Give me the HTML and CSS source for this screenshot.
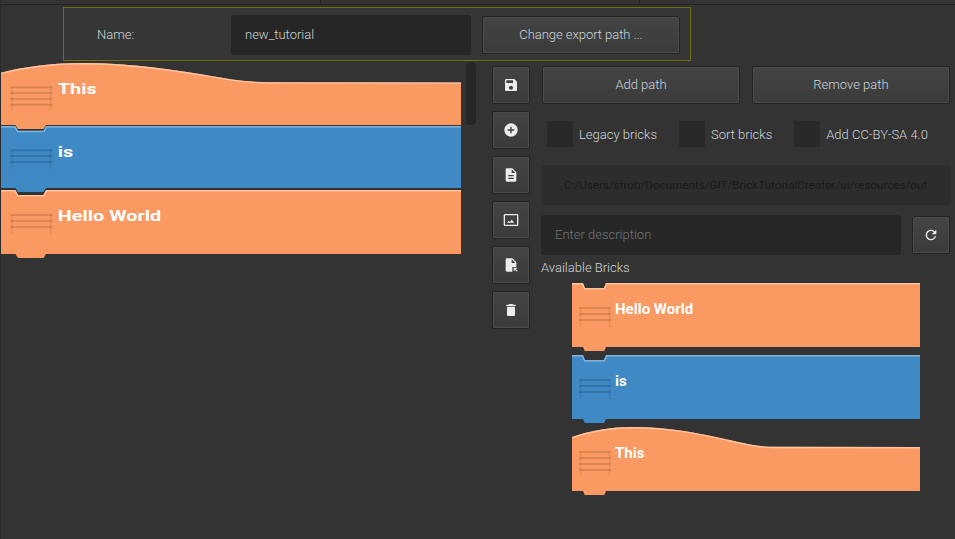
FILE: index.html
```html
<!DOCTYPE html>
<html lang="en">
<head>
<meta charset="utf-8">
<title>Brick Tutorial Creator</title>
<link rel="stylesheet" href="styles.css">
</head>
<body>
<svg class="defs" xmlns="http://www.w3.org/2000/svg">
  <symbol id="shape-hat" viewBox="0 0 348 68" preserveAspectRatio="none">
    <path class="fill" d="M0 10C20 3 40 0 61 0C110 0 150 12 178 17.500C186 19 192 19.800 204 19.800L348 20V64H34L32 68.500H13L11 64H0Z"/>
    <path class="edge" d="M0 10.700C20 3.700 40 .700 61 .700C110 .700 150 12.700 178 18.200C186 19.700 192 20.500 204 20.500L348 20.700"/>
  </symbol>
  <symbol id="shape-brick" viewBox="0 0 348 68" preserveAspectRatio="none">
    <path class="fill" d="M0 0H11L13 5H32L34 0H348V64H34L32 68.500H13L11 64H0Z"/>
    <path class="edge" d="M0 .700H10.500L12.500 5.700H32.500L34.500 .700H348"/>
  </symbol>
  <symbol id="grip-3" viewBox="0 0 348 68" preserveAspectRatio="none">
    <path class="grip" d="M7 25H39M7 31H39M7 37H39"/>
    <path class="grip-post" d="M8.500 25V44M37.500 25V44"/>
  </symbol>
  <symbol id="grip-4" viewBox="0 0 348 68" preserveAspectRatio="none">
    <path class="grip" d="M7 25H39M7 31H39M7 37H39M7 43H39"/>
    <path class="grip-post" d="M8.500 25V49M37.500 25V49"/>
  </symbol>
</svg>

<div class="app">
  <div class="tabs"><span class="tab tab-a"></span><span class="tab tab-b"></span><span class="tab tab-c"></span></div>

  <div class="namebar">
    <span class="name-label">Name:</span>
    <div class="field name-field">new_tutorial</div>
    <button class="btn change-btn">Change export path ...</button>
  </div>

  <div class="main">
    <div class="canvas">
      <div class="stack">
        <svg class="brick wide hat-h orange" viewBox="0 0 348 68" preserveAspectRatio="none">
          <use href="#shape-hat"/><use href="#grip-4"/>
          <text x="43" y="31.500" class="brick-text">This</text>
        </svg>
        <svg class="brick wide mid-h blue overlap-a" viewBox="0 0 348 68" preserveAspectRatio="none">
          <use href="#shape-brick"/><use href="#grip-3"/>
          <text x="43" y="32" class="brick-text">is</text>
        </svg>
        <svg class="brick wide orange overlap-b" viewBox="0 0 348 68" preserveAspectRatio="none">
          <use href="#shape-brick"/><use href="#grip-3"/>
          <text x="43" y="31" class="brick-text">Hello World</text>
        </svg>
      </div>
      <div class="scrollbar"></div>
    </div>

    <div class="tools">
      <button class="btn icon-btn" aria-label="Save"><svg class="icon" viewBox="0 0 24 24"><path d="M17 3H5c-1.110 0-2 .9-2 2v14c0 1.100.89 2 2 2h14c1.100 0 2-.9 2-2V7l-4-4zm-5 16c-1.660 0-3-1.340-3-3s1.340-3 3-3 3 1.340 3 3-1.340 3-3 3zm3-10H5V5h10v4z"/></svg></button>
      <button class="btn icon-btn" aria-label="Add"><svg class="icon" viewBox="0 0 24 24"><path d="M12 2C6.480 2 2 6.480 2 12s4.480 10 10 10 10-4.480 10-10S17.520 2 12 2zm5 11h-4v4h-2v-4H7v-2h4V7h2v4h4v2z"/></svg></button>
      <button class="btn icon-btn" aria-label="Document"><svg class="icon" viewBox="0 0 24 24"><path d="M14 2H6c-1.100 0-1.990.9-1.990 2L4 20c0 1.100.89 2 1.990 2H18c1.100 0 2-.9 2-2V8l-6-6zm2 16H8v-2h8v2zm0-4H8v-2h8v2zm-3-5V3.500L18.500 9H13z"/></svg></button>
      <button class="btn icon-btn" aria-label="Image"><svg class="icon" viewBox="0 0 24 24"><path fill-rule="evenodd" d="M3 3h18c1 0 2 1 2 2v14c0 1-1 2-2 2H3c-1.100 0-2-.9-2-2V5c0-1 1-2 2-2zm0 2v14h18V5H3zm3 11l2.500-3 1.800 2 2.700-3.500 4 4.500H6z"/></svg></button>
      <button class="btn icon-btn" aria-label="Export file"><svg class="icon" viewBox="0 0 24 24"><path d="M14 2H6c-1.100 0-1.990.9-1.990 2L4 20c0 1.100.89 2 1.990 2H14v-7h6V8l-6-6zm-1 7V3.500L18.500 9H13z"/><path d="M16 16h5v1.500h-2.300l3.300 3.300-1.200 1.200-3.300-3.300V21H16z"/></svg></button>
      <button class="btn icon-btn" aria-label="Delete"><svg class="icon" viewBox="0 0 24 24"><path d="M6 19c0 1.100.9 2 2 2h8c1.100 0 2-.9 2-2V7H6v12zM19 4h-3.500l-1-1h-5l-1 1H5v2h14V4z"/></svg></button>
    </div>

    <div class="side">
      <div class="path-btns">
        <button class="btn path-btn">Add path</button>
        <button class="btn path-btn">Remove path</button>
      </div>
      <div class="checks">
        <label class="check"><span class="box"></span>Legacy bricks</label>
        <label class="check"><span class="box"></span>Sort bricks</label>
        <label class="check"><span class="box"></span>Add CC-BY-SA 4.0</label>
      </div>
      <div class="path-display">C:/Users/strob/Documents/GIT/BrickTutorialCreator/ui/resources/out</div>
      <div class="desc-row">
        <div class="field desc-field">Enter description</div>
        <button class="btn icon-btn" aria-label="Refresh"><svg class="icon" viewBox="0 0 24 24"><path d="M17.650 6.350C16.200 4.900 14.210 4 12 4c-4.420 0-7.990 3.580-7.990 8s3.570 8 7.990 8c3.730 0 6.840-2.550 7.730-6h-2.080c-.82 2.330-3.040 4-5.650 4-3.310 0-6-2.690-6-6s2.690-6 6-6c1.660 0 3.140.69 4.220 1.780L13 11h7V4l-2.350 2.350z"/></svg></button>
      </div>
      <div class="avail-label">Available Bricks</div>
      <div class="avail">
        <svg class="brick orange" viewBox="0 0 348 68" preserveAspectRatio="none">
          <use href="#shape-brick"/><use href="#grip-3"/>
          <text x="43" y="31" class="brick-text">Hello World</text>
        </svg>
        <svg class="brick blue" viewBox="0 0 348 68" preserveAspectRatio="none">
          <use href="#shape-brick"/><use href="#grip-3"/>
          <text x="43" y="31" class="brick-text">is</text>
        </svg>
        <svg class="brick orange" viewBox="0 0 348 68" preserveAspectRatio="none">
          <use href="#shape-hat"/><use href="#grip-4"/>
          <text x="43" y="31" class="brick-text">This</text>
        </svg>
      </div>
    </div>
  </div>
</div>
</body>
</html>
```

FILE: styles.css
```css
* { box-sizing: border-box; }

html, body {
  margin: 0;
  height: 100%;
  overflow: hidden;
}

body {
  background: #333333;
  color: #ccd6da;
  font-family: Roboto, "Liberation Sans", sans-serif;
  font-size: 13px;
  font-weight: 300;
}

.defs { display: none; }

.app {
  width: 955px;
  height: 539px;
  border-left: 1px solid #2b2b2b;
  background: #333333;
}

/* top tab strip */
.tabs {
  display: flex;
  height: 5px;
  border-bottom: 1px solid #222222;
}
.tab { display: block; border-right: 1px solid #222222; }
.tab-a { width: 320px; }
.tab-b { width: 319px; }
.tab-c { flex: 1; border-right: 0; }

/* name bar */
.namebar {
  display: flex;
  align-items: center;
  width: 628px;
  height: 54px;
  margin: 2px 0 0 62px;
  padding-top: 2px;
  border: 1px solid #6f6f14;
  background: #363636;
}
.name-label { width: 167px; padding: 0 0 2px 33px; }
.field {
  display: flex;
  align-items: center;
  height: 40px;
  background: #262626;
  border-radius: 3px;
  padding: 0 0 1px 14px;
}
.name-field { width: 240px; }

.btn {
  display: flex;
  align-items: center;
  justify-content: center;
  padding: 0 0 1px;
  height: 38px;
  border: 1px solid #232323;
  border-radius: 2px;
  box-shadow: inset 0 0 0 1px #4b4b4b;
  background: linear-gradient(#444444, #3b3b3b);
  color: #ccd6da;
  font: inherit;
}
.change-btn { width: 198px; margin-left: 11px; letter-spacing: -0.05px; }

/* main area */
.main {
  display: flex;
  align-items: flex-start;
}

.canvas {
  display: flex;
  align-items: flex-start;
  width: 491px;
  padding-top: 1px;
}
.stack {
  display: flex;
  flex-direction: column;
  width: 460px;
  padding-top: 1px;
}
.scrollbar {
  width: 10px;
  height: 63px;
  margin-left: 5px;
  background: #262626;
  border-radius: 4px;
}

.brick { display: block; width: 348px; height: 68px; overflow: visible; }
.brick.wide { width: 460px; }
.brick.hat-h { height: 66px; }
.brick.mid-h { height: 66px; }
.overlap-a { margin-top: -3px; }
.overlap-b { margin-top: -2px; }

.orange { --fill: #fa9962; --edge: #fdc4a2; --grip: #a8623a; }
.blue { --fill: #3f89c5; --edge: #85b4da; --grip: #1f4f78; }
.fill { fill: var(--fill); }
.edge { fill: none; stroke: var(--edge); stroke-width: 1.400; vector-effect: non-scaling-stroke; }
.grip { fill: none; stroke: var(--grip); stroke-width: 2; opacity: .35; vector-effect: non-scaling-stroke; }
.grip-post { fill: none; stroke: var(--grip); stroke-width: 1.500; opacity: .2; vector-effect: non-scaling-stroke; }
.brick-text {
  fill: #ffffff;
  font-family: Roboto, "Liberation Sans", sans-serif;
  font-size: 15px;
  font-weight: 700;
}

/* tool buttons */
.tools {
  display: flex;
  flex-direction: column;
  gap: 7px;
  width: 49px;
  padding-top: 5px;
}
.icon-btn { width: 38px; padding: 0; }
.icon { display: block; width: 16px; height: 16px; fill: #ececec; }

/* right column */
.side {
  display: flex;
  flex-direction: column;
  width: 410px;
  padding-top: 5px;
}
.path-btns { display: flex; gap: 12px; padding-left: 1px; }
.path-btn { width: 198px; }

.checks {
  display: flex;
  height: 26px;
  margin-top: 17px;
  padding-left: 6px;
}
.check { display: flex; align-items: center; gap: 6px; margin-right: 22px; }
.box { display: block; width: 26px; height: 26px; background: #292929; }

.path-display {
  display: flex;
  align-items: center;
  height: 40px;
  margin-top: 18px;
  padding-left: 23px;
  background: #2d2d2d;
  border-radius: 4px;
  color: #1a1a1a;
  font-size: 11.650px;
  font-weight: 400;
}

.desc-row {
  display: flex;
  align-items: center;
  gap: 11px;
  margin-top: 10px;
}
.desc-field { width: 360px; color: #70767a; }

.avail-label { margin-top: 5px; padding-bottom: 1px; line-height: 15px; }

.avail {
  display: flex;
  flex-direction: column;
  gap: 4px;
  margin: 7px 0 0 31px;
}
```
